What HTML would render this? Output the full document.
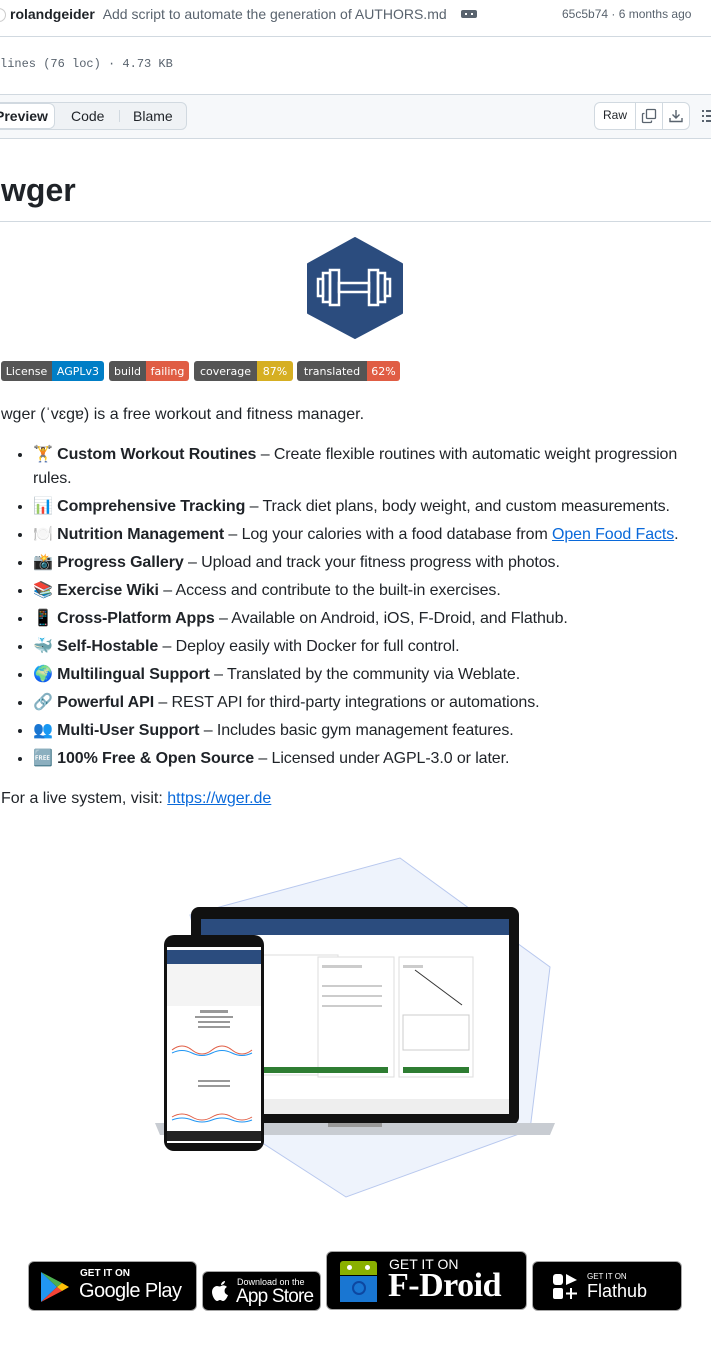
<!DOCTYPE html>
<html><head><meta charset="utf-8"><style>
*{box-sizing:border-box;margin:0;padding:0}
body{width:711px;height:1345px;overflow:hidden;background:#fff;font-family:"Liberation Sans",sans-serif;color:#1f2328;position:relative}
.abs{position:absolute}
a{color:#0969da;text-decoration:underline}
.badge{position:absolute;top:361px;height:20px;display:flex;font-family:"DejaVu Sans",sans-serif;font-size:11px;color:#fff;border-radius:3px;overflow:hidden}
.badge span{display:flex;align-items:center;justify-content:center;white-space:nowrap}
.l{background:#555}
ul{position:absolute;left:13px;top:443px;width:694px;font-size:16px;line-height:24px;list-style:disc;padding-left:20px;letter-spacing:-0.1px}
ul li{margin-bottom:4px}
.store{position:absolute;background:#000;border:1px solid #a6a6a6;border-radius:6px;color:#fff}
</style></head><body>
<div class="abs" style="left:-8px;top:8px;width:14px;height:14px;border-radius:50%;border:1px solid #ccc"></div>
<div class="abs" style="left:10px;top:6px;font-size:14px"><b>rolandgeider</b> <span style="color:#59636e;margin-left:4px">Add script to automate the generation of AUTHORS.md</span></div>
<div class="abs" style="left:461px;top:10px;width:16px;height:8px;background:#59636e;border-radius:2px"></div>
<div class="abs" style="left:465px;top:13px;width:8px;height:2px;border-left:2px solid #fff;border-right:2px solid #fff"></div>
<div class="abs" style="left:562px;top:7px;font-size:12px;color:#59636e">65c5b74 · 6 months ago</div>
<div class="abs" style="left:0;top:36px;width:711px;height:1px;background:#d1d9e0"></div>
<div class="abs" style="left:0;top:57px;font-family:'Liberation Mono',monospace;font-size:12px;color:#59636e">lines (76 loc) · 4.73 KB</div>
<div class="abs" style="left:0;top:94px;width:711px;height:45px;background:#f6f8fa;border-top:1px solid #d1d9e0;border-bottom:1px solid #d1d9e0"></div>
<div class="abs" style="left:-10px;top:102px;width:197px;height:28px;background:#eff2f5;border:1px solid #d1d9e0;border-radius:6px"></div>
<div class="abs" style="left:-14px;top:103px;width:69px;height:26px;background:#fff;border-radius:6px;border:1px solid #d1d9e0;font-size:14px;font-weight:bold;line-height:24px;padding-left:8px">Preview</div>
<div class="abs" style="left:71px;top:108px;font-size:14px">Code</div>
<div class="abs" style="left:119px;top:110px;width:1px;height:12px;background:#d1d9e0"></div>
<div class="abs" style="left:133px;top:108px;font-size:14px">Blame</div>
<div class="abs" style="left:594px;top:102px;width:96px;height:28px;background:#fff;border:1px solid #d1d9e0;border-radius:6px"></div>
<div class="abs" style="left:603px;top:108px;font-size:12px">Raw</div>
<div class="abs" style="left:635px;top:103px;width:1px;height:26px;background:#d1d9e0"></div>
<div class="abs" style="left:662px;top:103px;width:1px;height:26px;background:#d1d9e0"></div>
<svg class="abs" style="left:641px;top:108px" width="16" height="16" viewBox="0 0 16 16" fill="none" stroke="#59636e" stroke-width="1.3"><rect x="5.5" y="1.5" width="9" height="9" rx="1"/><path d="M3.5 5.5h-1a1 1 0 0 0-1 1v7a1 1 0 0 0 1 1h7a1 1 0 0 0 1-1v-1"/></svg>
<svg class="abs" style="left:668px;top:108px" width="16" height="16" viewBox="0 0 16 16" fill="none" stroke="#59636e" stroke-width="1.4"><path d="M8 2v8M4.5 6.5 8 10l3.5-3.5M2 10v3.5h12V10"/></svg>
<svg class="abs" style="left:702px;top:108px" width="9" height="16" viewBox="0 0 9 16" fill="#59636e"><rect x="0" y="2" width="2" height="2"/><rect x="0" y="7" width="2" height="2"/><rect x="0" y="12" width="2" height="2"/><rect x="4" y="2" width="5" height="2"/><rect x="4" y="7" width="5" height="2"/><rect x="4" y="12" width="5" height="2"/></svg>
<div class="abs" style="left:1px;top:172px;font-size:32px;font-weight:bold">wger</div>
<div class="abs" style="left:0;top:221px;width:711px;height:1px;background:#d1d9e0"></div>
<svg class="abs" style="left:306px;top:237px" width="98" height="102" viewBox="0 0 98 102"><path d="M49 1 96 27 96 76 49 101 2 76 2 27Z" fill="#2b4c7e" stroke="#2b4c7e" stroke-width="2" stroke-linejoin="round"/>
<g fill="none" stroke="#fff" stroke-width="2.5"><rect x="12" y="42" width="5" height="17"/><rect x="17" y="36" width="7" height="29"/><rect x="24" y="33" width="9" height="35"/><rect x="33" y="46" width="30" height="9"/><rect x="63" y="33" width="9" height="35"/><rect x="72" y="36" width="7" height="29"/><rect x="79" y="42" width="5" height="17"/></g></svg>
<div class="badge" style="left:1px"><span class="l" style="width:51px">License</span><span style="background:#007ec6;width:52px">AGPLv3</span></div>
<div class="badge" style="left:109px"><span class="l" style="width:37px">build</span><span style="background:#e05d44;width:43px">failing</span></div>
<div class="badge" style="left:194px"><span class="l" style="width:63px">coverage</span><span style="background:#d6af22;width:36px">87%</span></div>
<div class="badge" style="left:297px"><span class="l" style="width:70px">translated</span><span style="background:#e05d44;width:33px">62%</span></div>
<div class="abs" style="left:1px;top:406px;font-size:16px">wger (ˈvɛɡɐ) is a free workout and fitness manager.</div>
<ul>
<li>🏋️ <b>Custom Workout Routines</b> – Create flexible routines with automatic weight progression rules.</li>
<li>📊 <b>Comprehensive Tracking</b> – Track diet plans, body weight, and custom measurements.</li>
<li>🍽️ <b>Nutrition Management</b> – Log your calories with a food database from <a>Open Food Facts</a>.</li>
<li>📸 <b>Progress Gallery</b> – Upload and track your fitness progress with photos.</li>
<li>📚 <b>Exercise Wiki</b> – Access and contribute to the built-in exercises.</li>
<li>📱 <b>Cross-Platform Apps</b> – Available on Android, iOS, F-Droid, and Flathub.</li>
<li>🐳 <b>Self-Hostable</b> – Deploy easily with Docker for full control.</li>
<li>🌍 <b>Multilingual Support</b> – Translated by the community via Weblate.</li>
<li>🔗 <b>Powerful API</b> – REST API for third-party integrations or automations.</li>
<li>👥 <b>Multi-User Support</b> – Includes basic gym management features.</li>
<li>🆓 <b>100% Free &amp; Open Source</b> – Licensed under AGPL-3.0 or later.</li>
</ul>
<div class="abs" style="left:1px;top:790px;font-size:16px">For a live system, visit: <a>https://wger.de</a></div>
<svg class="abs" style="left:150px;top:855px" width="410" height="345" viewBox="0 0 410 345">
<path d="M250 3 400 112 380 275 196 342 100 280 40 60Z" fill="#eef3fc" stroke="#b8c8ee"/>
<rect x="41" y="52" width="328" height="218" rx="8" fill="#111"/>
<rect x="51" y="64" width="308" height="195" fill="#fff"/>
<rect x="51" y="64" width="308" height="16" fill="#2b4c7e"/>
<rect x="110" y="100" width="78" height="120" fill="#fff" stroke="#ddd"/>
<rect x="168" y="102" width="76" height="120" fill="#fff" stroke="#ddd"/>
<rect x="249" y="102" width="74" height="120" fill="#fff" stroke="#ddd"/>
<g fill="#ccc"><rect x="172" y="110" width="40" height="3"/><rect x="172" y="130" width="60" height="2"/><rect x="172" y="140" width="60" height="2"/><rect x="172" y="150" width="60" height="2"/><rect x="253" y="110" width="20" height="3"/><rect x="253" y="160" width="66" height="35" fill="none" stroke="#ccc"/></g>
<rect x="112" y="212" width="64" height="6" fill="#2e7d32"/><rect x="172" y="212" width="66" height="6" fill="#2e7d32"/><rect x="253" y="212" width="66" height="6" fill="#2e7d32"/>
<path d="M265 115 312 150" stroke="#333"/>
<rect x="51" y="244" width="308" height="15" fill="#eee"/>
<path d="M5 268H405L400 280H10Z" fill="#c8ccd2"/><rect x="178" y="268" width="54" height="4" fill="#999"/>
<rect x="14" y="80" width="100" height="216" rx="10" fill="#111"/>
<rect x="17" y="92" width="94" height="196" fill="#fff"/>
<rect x="17" y="95" width="94" height="14" fill="#2b4c7e"/>
<rect x="17" y="109" width="94" height="42" fill="#f4f4f4"/>
<g fill="#999"><rect x="50" y="155" width="28" height="3"/><rect x="45" y="161" width="38" height="2"/><rect x="48" y="166" width="32" height="2"/><rect x="48" y="171" width="32" height="2"/><rect x="48" y="225" width="32" height="2"/><rect x="48" y="230" width="32" height="2"/></g>
<path d="M22 195q10-8 20 0t20 0 20 0 20 0M22 262q10-6 20 0t20 0 20 0 20 0" stroke="#e05d44" fill="none"/>
<path d="M22 198q10-5 20 0t20 0 20 0 20 0M22 265q10-4 20 0t20 0 20 0 20 0" stroke="#2196f3" fill="none"/>
<rect x="17" y="276" width="94" height="10" fill="#222"/>
</svg>
<div class="store" style="left:28px;top:1261px;width:169px;height:50px">
<svg class="abs" style="left:11px;top:9px" width="30" height="32" viewBox="0 0 30 32"><path d="M1 1 17 16 1 31Z" fill="#2196f3"/><path d="M1 1 22 12 17 16Z" fill="#4caf50"/><path d="M1 31 22 20 17 16Z" fill="#f44336"/><path d="M22 12 29 16 22 20 17 16Z" fill="#ffc107"/></svg>
<div class="abs" style="left:51px;top:6px;font-size:10px;font-weight:bold">GET IT ON</div>
<div class="abs" style="left:50px;top:18px;font-size:20px;letter-spacing:-0.6px">Google Play</div></div>
<div class="store" style="left:202px;top:1271px;width:119px;height:40px">
<svg class="abs" style="left:9px;top:8px" width="18" height="22" viewBox="0 0 18 22" fill="#fff"><path d="M9 6c2-1 4-1 6 1-2 1-3 3-2 6 1 1 2 2 3 2-1 3-3 6-5 6-1 0-2-1-3-1s-2 1-3 1C3 21 0 16 0 12s3-6 5-6c1 0 3 1 4 0z"/><path d="M9 5c0-2 2-4 4-4 0 2-2 4-4 4z"/></svg>
<div class="abs" style="left:34px;top:5px;font-size:9px">Download on the</div>
<div class="abs" style="left:33px;top:14px;font-size:19px;letter-spacing:-0.8px">App Store</div></div>
<div class="store" style="left:326px;top:1251px;width:201px;height:59px">
<div class="abs" style="left:13px;top:9px;width:37px;height:14px;background:#8ab000;border-radius:3px 3px 0 0"></div>
<div class="abs" style="left:20px;top:13px;width:5px;height:5px;background:#fff;border-radius:50%"></div>
<div class="abs" style="left:38px;top:13px;width:5px;height:5px;background:#fff;border-radius:50%"></div>
<div class="abs" style="left:13px;top:24px;width:37px;height:26px;background:#1976d2"></div>
<div class="abs" style="left:25px;top:29px;width:14px;height:14px;border:2px solid #0d47a1;border-radius:50%"></div>
<div class="abs" style="left:62px;top:4px;font-size:14px">GET IT ON</div>
<div class="abs" style="left:61px;top:15px;font-size:34px;font-weight:bold;font-family:'Liberation Serif',serif;letter-spacing:-0.5px">F-Droid</div></div>
<div class="store" style="left:532px;top:1261px;width:150px;height:50px">
<svg class="abs" style="left:20px;top:12px" width="26" height="26" viewBox="0 0 26 26" fill="#fff"><rect x="0" y="0" width="10" height="11" rx="3"/><path d="M13 0 24 6 13 11Z"/><rect x="0" y="14" width="10" height="11" rx="2"/><path d="M18 14v11M13 19.5h11" stroke="#fff" stroke-width="2"/></svg>
<div class="abs" style="left:54px;top:10px;font-size:8px">GET IT ON</div>
<div class="abs" style="left:54px;top:19px;font-size:18px">Flathub</div></div>
</body></html>
